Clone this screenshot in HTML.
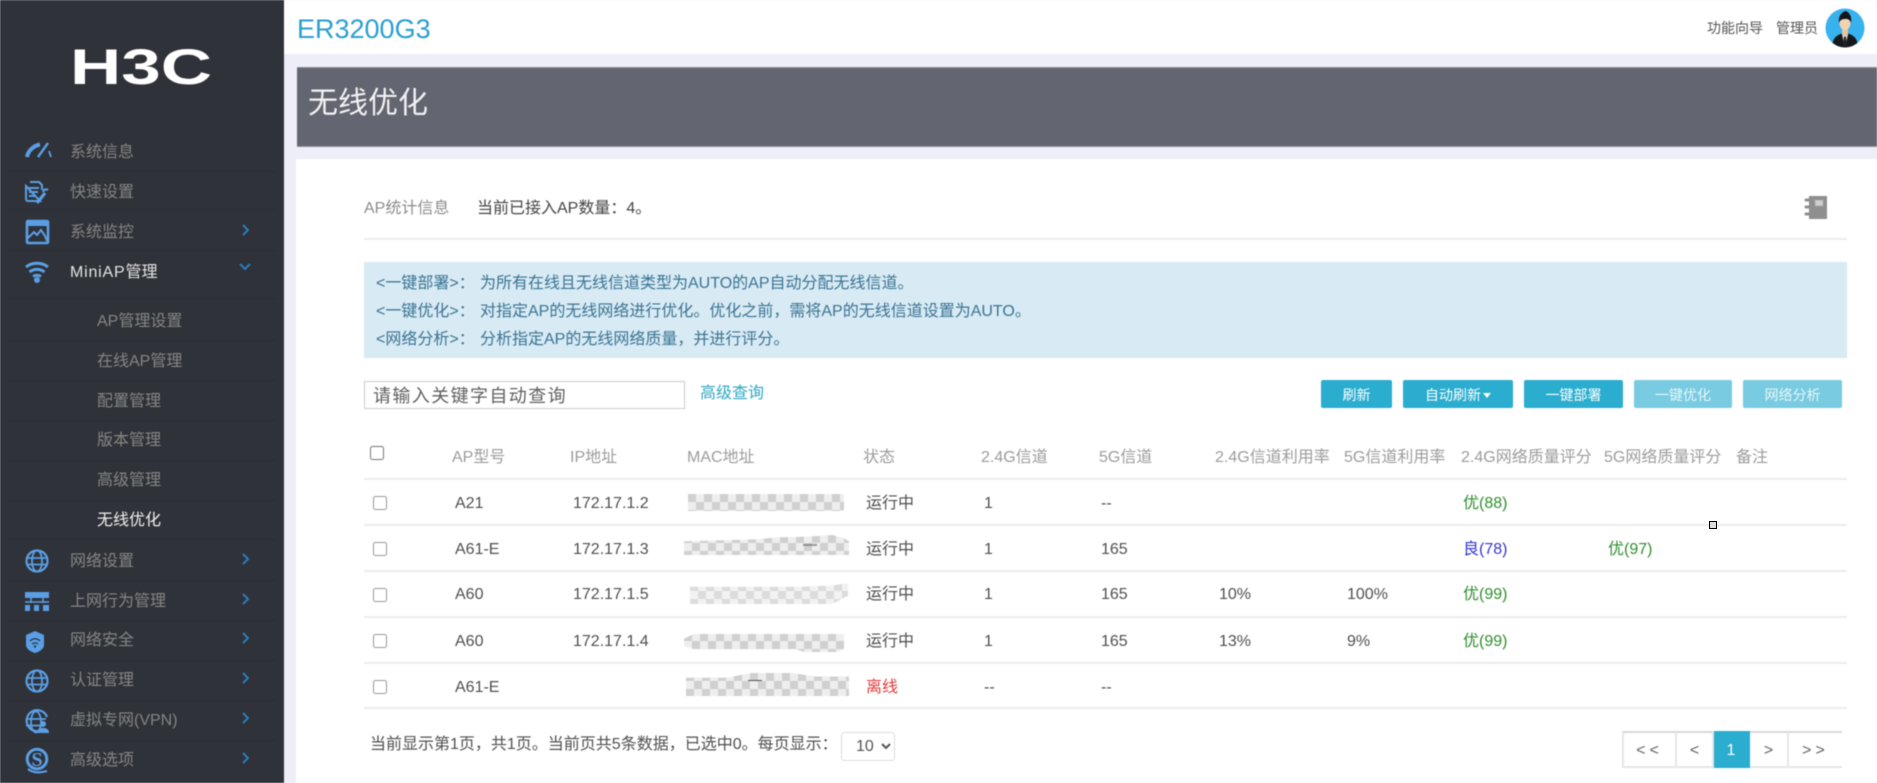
<!DOCTYPE html>
<html lang="zh-CN">
<head>
<meta charset="utf-8">
<title>无线优化</title>
<style>
html,body{margin:0;padding:0;width:1877px;height:783px;overflow:hidden;background:#eeeef8}
*{box-sizing:border-box}
#w{position:absolute;left:0;top:0;width:1877px;height:783px;filter:blur(.45px);font-family:"Liberation Sans","Noto Sans CJK SC",sans-serif;font-size:16px;color:#4f4f4f}
.a{position:absolute}
.t{position:absolute;white-space:nowrap;line-height:20px;height:20px}
.s{color:#858585}
.l{position:absolute;left:8px;width:268px;height:1px;background:#2c2f34}
.h{color:#9c9c9c}
.r{position:absolute;left:364px;width:1483px;height:2px;background:#ececec}
.b{position:absolute;top:380px;height:28px;background:#2aadce;color:#fff;font-size:14px;line-height:31px;text-align:center;border-radius:2px}
.d{background:#78cbe0;color:#e8f6fa}
.c{position:absolute;margin:0;width:14px;height:14px;opacity:.75}
.g{color:#2f8f2f}
.m{position:absolute;background:conic-gradient(#eee 25%,#d0d0d0 0 50%,#eee 0 75%,#d0d0d0 0) 0 0/16px 16px}
.p{position:absolute;top:731px;height:37px;line-height:36px;text-align:center;color:#666;font-size:16px;border-top:2px solid #d8d8d8;border-bottom:2px solid #e6e6e6;border-right:2px solid #e6e6e6;background:#fff}
.q{display:inline-block;width:104px}
.z{font-family:"Noto Sans CJK TC",sans-serif}
input::placeholder{color:#5f5f5f;opacity:1}
</style>
</head>
<body>
<div id="w">
  <!-- sidebar -->
  <div class="a" style="left:0;top:0;width:284px;height:783px;background:#2f3238"></div>
  <!-- top bar -->
  <div class="a" style="left:284px;top:0;width:1593px;height:54px;background:#fff"></div>
  <!-- title band -->
  <div class="a" style="left:297px;top:67px;width:1580px;height:80px;background:#636571;border-top:1px solid #8f909a;border-bottom:1px solid #8f909a"></div>
  <!-- main panel -->
  <div class="a" style="left:296px;top:159px;width:1581px;height:624px;background:#fff"></div>

  <!-- logo -->
  <svg class="a" style="left:0;top:0" width="284" height="120">
    <text x="70" y="84" font-family="Liberation Sans" font-weight="700" font-size="50" fill="#fff" textLength="142" lengthAdjust="spacingAndGlyphs">H3C</text>
  </svg>

  <!-- sidebar lines -->
  <div class="l" style="top:171px"></div><div class="l" style="top:209px"></div><div class="l" style="top:250px"></div>
  <div class="l" style="top:298px"></div><div class="l" style="top:340px"></div><div class="l" style="top:380px"></div>
  <div class="l" style="top:420px"></div><div class="l" style="top:460px"></div><div class="l" style="top:500px"></div>
  <div class="l" style="top:539px"></div><div class="l" style="top:580px"></div><div class="l" style="top:620px"></div>
  <div class="l" style="top:660px"></div><div class="l" style="top:700px"></div><div class="l" style="top:740px"></div>

  <!-- sidebar text -->
  <div class="t s" style="left:70px;top:143px">系统信息</div>
  <div class="t s" style="left:70px;top:183px">快速设置</div>
  <div class="t s" style="left:70px;top:223px">系统监控</div>
  <div class="t" style="left:70px;top:263px;color:#e4e4e4"><span style="letter-spacing:.8px">MiniAP</span>管理</div>
  <div class="t s" style="left:97px;top:312px">AP管理设置</div>
  <div class="t s" style="left:97px;top:352px">在线AP管理</div>
  <div class="t s" style="left:97px;top:392px">配置管理</div>
  <div class="t s" style="left:97px;top:431px">版本管理</div>
  <div class="t s" style="left:97px;top:471px">高级管理</div>
  <div class="t" style="left:97px;top:511px;color:#f0f0f0">无线优化</div>
  <div class="t s" style="left:70px;top:552px">网络设置</div>
  <div class="t s" style="left:70px;top:592px">上网行为管理</div>
  <div class="t s" style="left:70px;top:631px">网络安全</div>
  <div class="t s" style="left:70px;top:671px">认证管理</div>
  <div class="t s" style="left:70px;top:711px">虚拟专网(VPN)</div>
  <div class="t s" style="left:70px;top:751px">高级选项</div>

  <!-- sidebar icons and chevrons -->
  <svg class="a" style="left:0;top:0" width="284" height="783" fill="none" stroke="#5a9fe6" stroke-width="2.2">
    <!-- gauge -->
    <path d="M27 157C28 151 33 146 40 144.500" stroke-width="4"/>
    <path d="M38 157L48 143" stroke-width="2.400"/>
    <path d="M49 151L51 157" stroke-width="1.800"/>
    <!-- doc + wrench -->
    <path d="M30 182H39L42 185V190M40 201H28A2 2 0 0 1 26 199V186Z" stroke-width="2"/>
    <path d="M29 188H39M29 192H38M29 196H36" stroke-width="2"/>
    <path d="M37 203L45 193" stroke-width="3.200"/>
    <path d="M43 192C44 189 46 189 48 190" stroke-width="2.200"/>
    <!-- monitor -->
    <rect x="27" y="221" width="21" height="22" rx="1" stroke-width="2.600"/>
    <path d="M27 221H48V226H27Z" fill="#5a9fe6" stroke="none"/>
    <path d="M28 238L34 232L37 235L41 230L45 236L47 241" stroke-width="2"/>
    <!-- wifi -->
    <path d="M26 267C32 262 42 262 48 267" stroke-width="3"/>
    <path d="M29.500 272C34 268.500 40 268.500 44.500 272" stroke-width="3"/>
    <path d="M33 276.500C35.500 274.800 38.500 274.800 41 276.500" stroke-width="2.800"/>
    <circle cx="37" cy="280" r="3" fill="#5a9fe6" stroke="none"/>
    <!-- globe 1 -->
    <circle cx="37" cy="561" r="10.500"/>
    <ellipse cx="37" cy="561" rx="5" ry="10.500" stroke-width="1.800"/>
    <path d="M27 558H47M27 564.500H47" stroke-width="1.800"/>
    <!-- behaviour -->
    <path d="M25 592H49V598H25Z" fill="#5a9fe6" stroke="none"/>
    <path d="M31 598V603M43 598V603M25 602H49" stroke-width="1.500"/>
    <path d="M25 605H30V611H25ZM34 605H39V611H34ZM43 605H49V611H43Z" fill="#5a9fe6" stroke="none"/>
    <!-- shield -->
    <path d="M26 635L35 631L44 635V645C44 649 39 652 35 653C31 652 26 649 26 645Z" fill="#5a9fe6" stroke="none"/>
    <path d="M30 641C33 638 37 638 40 641M32 644C34 642.500 36 642.500 38 644" stroke="#2f3238" stroke-width="1.300"/>
    <circle cx="35" cy="646.500" r="1.200" fill="#2f3238" stroke="none"/>
    <!-- globe 2 -->
    <circle cx="37" cy="681" r="10.500"/>
    <ellipse cx="37" cy="681" rx="5" ry="10.500" stroke-width="1.800"/>
    <path d="M27 678H47M27 684.500H47" stroke-width="1.800"/>
    <!-- globe + user -->
    <path d="M43.500 729A10.500 10.500 0 1 1 47 717" />
    <ellipse cx="36" cy="722" rx="5" ry="10.500" stroke-width="1.800"/>
    <path d="M26 719H46M26 725.500H42" stroke-width="1.800"/>
    <circle cx="43" cy="724" r="3" fill="#5a9fe6" stroke="none"/>
    <path d="M37 733C37 729 40 728 43 728C46 728 49 729 49 733Z" fill="#5a9fe6" stroke="none"/>
    <!-- S -->
    <circle cx="37" cy="759" r="9.800" stroke-width="3"/>
    <path d="M28 769C33 773 40 773 47 771" stroke-width="2.200"/>
    <!-- chevrons -->
    <g stroke="#2a7dbf" stroke-width="2">
      <path d="M243 225L248 230L243 235"/>
      <path d="M240 264L245 269L250 264"/>
      <path d="M243 554L248 559L243 564"/>
      <path d="M243 594L248 599L243 604"/>
      <path d="M243 633L248 638L243 643"/>
      <path d="M243 673L248 678L243 683"/>
      <path d="M243 713L248 718L243 723"/>
      <path d="M243 753L248 758L243 763"/>
    </g>
    <text x="37" y="766" text-anchor="middle" font-family="Liberation Serif" font-weight="700" font-size="20" fill="#5a9fe6" stroke="none">S</text>
  </svg>

  <!-- top bar content -->
  <div class="t" style="left:297px;top:11px;height:36px;line-height:36px;font-size:27px;color:#2a9fd0">ER3200G3</div>
  <div class="t" style="left:1707px;top:18px;font-size:14px;color:#555">功能向导</div>
  <div class="t" style="left:1776px;top:18px;font-size:14px;color:#555">管理员</div>
  <svg class="a" style="left:1825px;top:8px" width="40" height="40">
    <defs><clipPath id="av"><circle cx="20" cy="20" r="19.500"/></clipPath></defs>
    <g clip-path="url(#av)">
      <rect width="40" height="40" fill="#38b2ee"/>
      <path d="M7 40C7 30 12 26 20 25C28 26 33 30 33 40Z" fill="#15191c"/>
      <path d="M17 26L20 40L23 26Z" fill="#eef2f2"/>
      <path d="M19 28H21L22 40H18Z" fill="#222"/>
      <path d="M17 20H23V27L20 29L17 27Z" fill="#e8c6a4"/>
      <ellipse cx="20" cy="15" rx="5.500" ry="7" fill="#f1d3b4"/>
      <path d="M14 15C13 9 16 4 21 3C25 5 27 9 26 15C25 12 23 10.500 20 11C17 11 15 12 14 15Z" fill="#12161a"/>
    </g>
  </svg>

  <!-- title -->
  <div class="t" style="left:308px;top:84px;height:40px;line-height:40px;font-size:30px;color:#f2f2f4">无线优化</div>

  <!-- stats -->
  <div class="t" style="left:364px;top:199px;color:#8c8c8c">AP统计信息</div>
  <div class="t" style="left:477px;top:196px;color:#444">当前已接入AP数量<span class="z">：</span>4。</div>
  <svg class="a" style="left:1804px;top:195px" width="24" height="25">
    <path d="M5 1H23V24H5Z" fill="#8f8f8f"/>
    <rect x="11" y="5" width="8" height="6" fill="#cfcfcf" stroke="#a8a8a8"/>
    <path d="M2 5H7M2 12H7M2 19H7" stroke="#8f8f8f" stroke-width="3" stroke-linecap="round"/>
  </svg>
  <div class="a" style="left:364px;top:238px;width:1483px;height:2px;background:#ececec"></div>

  <!-- alert -->
  <div class="a" style="left:364px;top:262px;width:1483px;height:96px;background:#d8eaf4"></div>
  <div class="t" style="left:376px;top:271px;color:#3a7492"><span class="q">&lt;一键部署&gt;<span class="z">：</span></span>为所有在线且无线信道类型为AUTO的AP自动分配无线信道。</div>
  <div class="t" style="left:376px;top:299px;color:#3a7492"><span class="q">&lt;一键优化&gt;<span class="z">：</span></span>对指定AP的无线网络进行优化。优化之前，需将AP的无线信道设置为AUTO。</div>
  <div class="t" style="left:376px;top:327px;color:#3a7492"><span class="q">&lt;网络分析&gt;<span class="z">：</span></span>分析指定AP的无线网络质量，并进行评分。</div>

  <!-- search -->
  <input class="a" type="text" placeholder="请输入关键字自动查询" style="left:364px;top:381px;width:321px;height:28px;border:1px solid #ccc;padding:3px 8px 0;font:18px 'Liberation Sans','Noto Sans CJK SC',sans-serif;letter-spacing:1.400px;color:#555;background:#fff;outline:0">
  <div class="t" style="left:700px;top:384px;color:#2fa7c2">高级查询</div>

  <!-- buttons -->
  <div class="b" style="left:1321px;width:71px">刷新</div>
  <div class="b" style="left:1403px;width:110px">自动刷新 <span style="display:inline-block;width:0;height:0;border:4px solid transparent;border-top:5px solid #fff;border-bottom:0;vertical-align:2px;margin-left:-2px"></span></div>
  <div class="b" style="left:1524px;width:99px">一键部署</div>
  <div class="b d" style="left:1634px;width:98px">一键优化</div>
  <div class="b d" style="left:1743px;width:99px">网络分析</div>

  <!-- table header -->
  <input class="c" type="checkbox" style="left:370px;top:446px;opacity:1">
  <div class="t h" style="left:452px;top:448px">AP型号</div>
  <div class="t h" style="left:570px;top:448px">IP地址</div>
  <div class="t h" style="left:687px;top:448px">MAC地址</div>
  <div class="t h" style="left:863px;top:448px">状态</div>
  <div class="t h" style="left:981px;top:448px">2.4G信道</div>
  <div class="t h" style="left:1099px;top:448px">5G信道</div>
  <div class="t h" style="left:1215px;top:448px">2.4G信道利用率</div>
  <div class="t h" style="left:1344px;top:448px">5G信道利用率</div>
  <div class="t h" style="left:1461px;top:448px">2.4G网络质量评分</div>
  <div class="t h" style="left:1604px;top:448px">5G网络质量评分</div>
  <div class="t h" style="left:1736px;top:448px">备注</div>

  <div class="r" style="top:478px"></div>
  <div class="r" style="top:524px"></div>
  <div class="r" style="top:570px"></div>
  <div class="r" style="top:616px"></div>
  <div class="r" style="top:662px"></div>
  <div class="r" style="top:707px"></div>

  <!-- row 1 -->
  <input class="c" type="checkbox" style="left:373px;top:496px">
  <div class="t" style="left:455px;top:494px">A21</div>
  <div class="t" style="left:573px;top:494px">172.17.1.2</div>
  <div class="m" style="left:688px;top:494px;width:156px;height:17px"></div>
  <div class="t" style="left:866px;top:494px">运行中</div>
  <div class="t" style="left:984px;top:494px">1</div>
  <div class="t" style="left:1101px;top:494px">--</div>
  <div class="t g" style="left:1463px;top:494px">优(88)</div>

  <!-- row 2 -->
  <input class="c" type="checkbox" style="left:373px;top:542px">
  <div class="t" style="left:455px;top:540px">A61-E</div>
  <div class="t" style="left:573px;top:540px">172.17.1.3</div>
  <div class="m" style="left:684px;top:535px;width:165px;height:21px;clip-path:polygon(0 30%,45% 20%,55% 12%,75% 8%,90% 0,97% 15%,100% 30%,100% 95%,0 95%)"></div>
  <div class="a" style="left:803px;top:544px;width:14px;height:2px;background:#666;opacity:.6"></div>
  <div class="t" style="left:866px;top:540px">运行中</div>
  <div class="t" style="left:984px;top:540px">1</div>
  <div class="t" style="left:1101px;top:540px">165</div>
  <div class="t" style="left:1463px;top:540px;color:#3535d0">良(78)</div>
  <div class="t g" style="left:1608px;top:540px">优(97)</div>

  <!-- row 3 -->
  <input class="c" type="checkbox" style="left:373px;top:588px">
  <div class="t" style="left:455px;top:585px">A60</div>
  <div class="t" style="left:573px;top:585px">172.17.1.5</div>
  <div class="m" style="left:690px;top:583px;width:158px;height:21px;opacity:.75;clip-path:polygon(0 18%,70% 18%,90% 12%,100% 0,100% 60%,90% 100%,0 100%)"></div>
  <div class="t" style="left:866px;top:585px">运行中</div>
  <div class="t" style="left:984px;top:585px">1</div>
  <div class="t" style="left:1101px;top:585px">165</div>
  <div class="t" style="left:1219px;top:585px">10%</div>
  <div class="t" style="left:1347px;top:585px">100%</div>
  <div class="t g" style="left:1463px;top:585px">优(99)</div>

  <!-- row 4 -->
  <input class="c" type="checkbox" style="left:373px;top:634px">
  <div class="t" style="left:455px;top:632px">A60</div>
  <div class="t" style="left:573px;top:632px">172.17.1.4</div>
  <div class="m" style="left:684px;top:633px;width:160px;height:19px;clip-path:polygon(0 30%,6% 5%,100% 5%,100% 85%,96% 100%,75% 100%,70% 85%,6% 85%,0 70%)"></div>
  <div class="t" style="left:866px;top:632px">运行中</div>
  <div class="t" style="left:984px;top:632px">1</div>
  <div class="t" style="left:1101px;top:632px">165</div>
  <div class="t" style="left:1219px;top:632px">13%</div>
  <div class="t" style="left:1347px;top:632px">9%</div>
  <div class="t g" style="left:1463px;top:632px">优(99)</div>

  <!-- row 5 -->
  <input class="c" type="checkbox" style="left:373px;top:680px">
  <div class="t" style="left:455px;top:678px">A61-E</div>
  <div class="m" style="left:686px;top:673px;width:163px;height:23px;clip-path:polygon(0 20%,25% 20%,40% 0,65% 0,80% 15%,100% 15%,100% 100%,0 100%)"></div>
  <div class="a" style="left:748px;top:680px;width:14px;height:1px;background:#555"></div>
  <div class="t" style="left:866px;top:678px;color:#e23a3a">离线</div>
  <div class="t" style="left:984px;top:678px">--</div>
  <div class="t" style="left:1101px;top:678px">--</div>

  <!-- footer -->
  <div class="t" style="left:370px;top:735px">当前显示第1页，共1页。当前页共5条数据，已选中0。每页显示：</div>
  <select class="a" style="left:841px;top:732px;width:54px;height:29px;border:1px solid #ddd;border-radius:3px;background:#fff;color:#555;font:16px 'Liberation Sans',sans-serif;padding-left:10px;outline:0"><option>10</option></select>

  <!-- pagination -->
  <div class="p" style="left:1622px;width:55px;border-left:2px solid #e6e6e6;letter-spacing:4px">&lt;&lt;</div>
  <div class="p" style="left:1677px;width:37px">&lt;</div>
  <div class="p" style="left:1714px;width:36px;background:#2aadce;color:#fff;border-color:#2aadce">1</div>
  <div class="p" style="left:1750px;width:39px">&gt;</div>
  <div class="p" style="left:1789px;width:53px;letter-spacing:4px;border-right:0">&gt;&gt;</div>
</div>

<!-- selection handle -->
<div class="a" style="left:1709px;top:521px;width:8px;height:8px;border:1.500px solid #000;background:#ddd"></div>
</body>
</html>
